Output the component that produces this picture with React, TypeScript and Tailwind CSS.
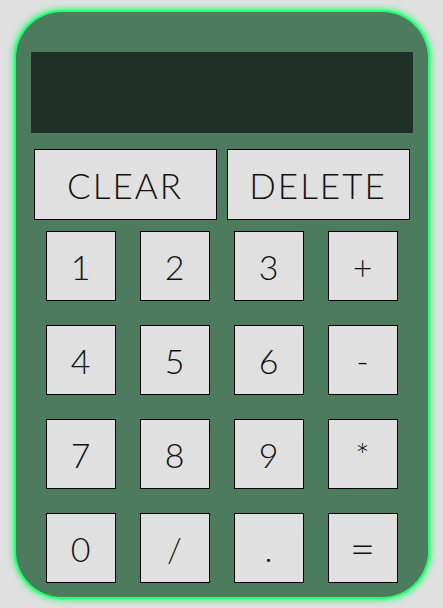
const keys = ['1', '2', '3', '+', '4', '5', '6', '-', '7', '8', '9', '*', '0', '/', '.', '='];

export default function App() {
  return (
    <div className="min-h-screen bg-[#e0e0e0] flex justify-center pt-3 font-['Lato','Liberation_Sans',sans-serif]">
      <div className="w-[412px] h-[585px] rounded-[46px] bg-[#4c7b5e] px-[15px] pt-[40px] shadow-[0_0_0_2px_#22ff70,0_0_6px_3px_#22ff70]">
        <div className="h-[81px] bg-[#1f3127]" />

        <div className="mt-4 flex gap-[10px] px-[3px]">
          <button className="flex-1 h-[71px] border border-black bg-[#e0e0e0] text-[35px] font-light tracking-[2px] text-[#111] pt-[2px]">
            CLEAR
          </button>
          <button className="flex-1 h-[71px] border border-black bg-[#e0e0e0] text-[35px] font-light tracking-[2px] text-[#111] pt-[2px]">
            DELETE
          </button>
        </div>

        <div className="mt-[11px] pl-[15px] grid grid-cols-[repeat(4,70px)] gap-6">
          {keys.map((k) => (
            <button
              key={k}
              className={`h-[70px] border border-black bg-[#e0e0e0] font-light text-[#111] flex items-center justify-center ${
                k === '=' ? 'text-[44px]' : 'text-[34px]'
              }`}
            >
              {k}
            </button>
          ))}
        </div>
      </div>
    </div>
  );
}
